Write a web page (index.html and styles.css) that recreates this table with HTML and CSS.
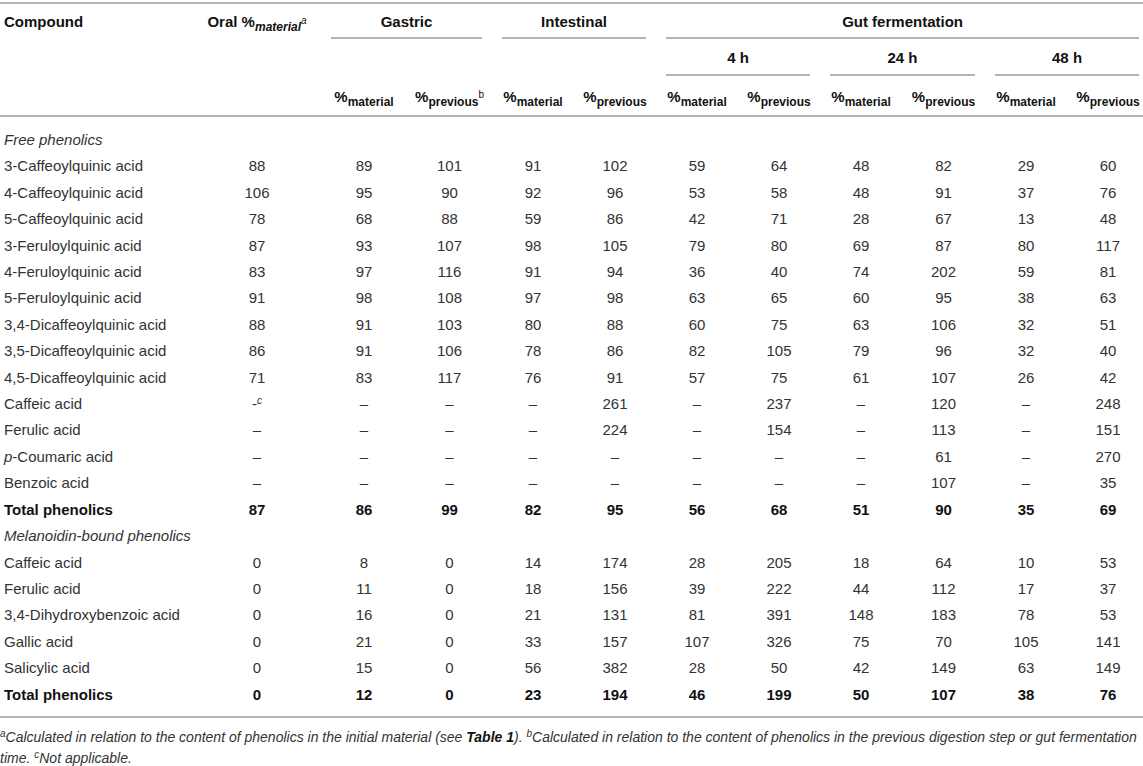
FILE: index.html
```html
<!DOCTYPE html>
<html>
<head>
<meta charset="utf-8">
<link rel="stylesheet" href="styles.css">
</head>
<body>
<div class="wrap">
<table class="data">
<colgroup>
<col class="c-name"><col class="c-oral">
<col class="c-g1"><col class="c-g2">
<col class="c-n"><col class="c-n">
<col class="c-n"><col class="c-n">
<col class="c-n"><col class="c-w">
<col class="c-n"><col class="c-n">
</colgroup>
<thead>
<tr class="r1">
<th class="name">Compound</th>
<th>Oral %<i class="sb">material</i><sup class="fn">a</sup></th>
<th colspan="2"><div class="cap">Gastric</div></th>
<th colspan="2"><div class="cap">Intestinal</div></th>
<th colspan="6"><div class="cap">Gut fermentation</div></th>
</tr>
<tr class="r2">
<th></th><th></th><th colspan="2"></th><th colspan="2"></th>
<th colspan="2"><div class="cap">4 h</div></th>
<th colspan="2"><div class="cap">24 h</div></th>
<th colspan="2"><div class="cap">48 h</div></th>
</tr>
<tr class="r3">
<th></th><th></th>
<th>%<sub>material</sub></th><th>%<sub>previous<sup class="fn2">b</sup></sub></th>
<th>%<sub>material</sub></th><th>%<sub>previous</sub></th>
<th>%<sub>material</sub></th><th>%<sub>previous</sub></th>
<th>%<sub>material</sub></th><th>%<sub>previous</sub></th>
<th>%<sub>material</sub></th><th>%<sub>previous</sub></th>
</tr>
</thead>
<tbody>
<tr class="first"><td class="name sec" colspan="12">Free phenolics</td></tr>
<tr><td class="name">3-Caffeoylquinic acid</td><td>88</td><td>89</td><td>101</td><td>91</td><td>102</td><td>59</td><td>64</td><td>48</td><td>82</td><td>29</td><td>60</td></tr>
<tr><td class="name">4-Caffeoylquinic acid</td><td>106</td><td>95</td><td>90</td><td>92</td><td>96</td><td>53</td><td>58</td><td>48</td><td>91</td><td>37</td><td>76</td></tr>
<tr><td class="name">5-Caffeoylquinic acid</td><td>78</td><td>68</td><td>88</td><td>59</td><td>86</td><td>42</td><td>71</td><td>28</td><td>67</td><td>13</td><td>48</td></tr>
<tr><td class="name">3-Feruloylquinic acid</td><td>87</td><td>93</td><td>107</td><td>98</td><td>105</td><td>79</td><td>80</td><td>69</td><td>87</td><td>80</td><td>117</td></tr>
<tr><td class="name">4-Feruloylquinic acid</td><td>83</td><td>97</td><td>116</td><td>91</td><td>94</td><td>36</td><td>40</td><td>74</td><td>202</td><td>59</td><td>81</td></tr>
<tr><td class="name">5-Feruloylquinic acid</td><td>91</td><td>98</td><td>108</td><td>97</td><td>98</td><td>63</td><td>65</td><td>60</td><td>95</td><td>38</td><td>63</td></tr>
<tr><td class="name">3,4-Dicaffeoylquinic acid</td><td>88</td><td>91</td><td>103</td><td>80</td><td>88</td><td>60</td><td>75</td><td>63</td><td>106</td><td>32</td><td>51</td></tr>
<tr><td class="name">3,5-Dicaffeoylquinic acid</td><td>86</td><td>91</td><td>106</td><td>78</td><td>86</td><td>82</td><td>105</td><td>79</td><td>96</td><td>32</td><td>40</td></tr>
<tr><td class="name">4,5-Dicaffeoylquinic acid</td><td>71</td><td>83</td><td>117</td><td>76</td><td>91</td><td>57</td><td>75</td><td>61</td><td>107</td><td>26</td><td>42</td></tr>
<tr><td class="name">Caffeic acid</td><td>-<sup class="fn">c</sup></td><td>–</td><td>–</td><td>–</td><td>261</td><td>–</td><td>237</td><td>–</td><td>120</td><td>–</td><td>248</td></tr>
<tr><td class="name">Ferulic acid</td><td>–</td><td>–</td><td>–</td><td>–</td><td>224</td><td>–</td><td>154</td><td>–</td><td>113</td><td>–</td><td>151</td></tr>
<tr><td class="name"><i>p</i>-Coumaric acid</td><td>–</td><td>–</td><td>–</td><td>–</td><td>–</td><td>–</td><td>–</td><td>–</td><td>61</td><td>–</td><td>270</td></tr>
<tr><td class="name">Benzoic acid</td><td>–</td><td>–</td><td>–</td><td>–</td><td>–</td><td>–</td><td>–</td><td>–</td><td>107</td><td>–</td><td>35</td></tr>
<tr class="total"><td class="name">Total phenolics</td><td>87</td><td>86</td><td>99</td><td>82</td><td>95</td><td>56</td><td>68</td><td>51</td><td>90</td><td>35</td><td>69</td></tr>
<tr><td class="name sec" colspan="12">Melanoidin-bound phenolics</td></tr>
<tr><td class="name">Caffeic acid</td><td>0</td><td>8</td><td>0</td><td>14</td><td>174</td><td>28</td><td>205</td><td>18</td><td>64</td><td>10</td><td>53</td></tr>
<tr><td class="name">Ferulic acid</td><td>0</td><td>11</td><td>0</td><td>18</td><td>156</td><td>39</td><td>222</td><td>44</td><td>112</td><td>17</td><td>37</td></tr>
<tr><td class="name">3,4-Dihydroxybenzoic acid</td><td>0</td><td>16</td><td>0</td><td>21</td><td>131</td><td>81</td><td>391</td><td>148</td><td>183</td><td>78</td><td>53</td></tr>
<tr><td class="name">Gallic acid</td><td>0</td><td>21</td><td>0</td><td>33</td><td>157</td><td>107</td><td>326</td><td>75</td><td>70</td><td>105</td><td>141</td></tr>
<tr><td class="name">Salicylic acid</td><td>0</td><td>15</td><td>0</td><td>56</td><td>382</td><td>28</td><td>50</td><td>42</td><td>149</td><td>63</td><td>149</td></tr>
<tr class="total last"><td class="name">Total phenolics</td><td>0</td><td>12</td><td>0</td><td>23</td><td>194</td><td>46</td><td>199</td><td>50</td><td>107</td><td>38</td><td>76</td></tr>
</tbody>
</table>
<p class="notes"><sup class="nm">a</sup>Calculated in relation to the content of phenolics in the initial material (see <b>Table 1</b>). <sup class="nm">b</sup>Calculated in relation to the content of phenolics in the previous digestion step or gut fermentation time. <sup class="nm">c</sup>Not applicable.</p>
</div>
</body>
</html>
```

FILE: styles.css
```css
html, body {
  margin: 0;
  padding: 0;
  background: #fff;
  overflow: hidden;
}
body {
  font-family: "Liberation Sans", Arial, sans-serif;
  color: #333;
  font-size: 15px;
}
.wrap {
  padding-top: 2px;
  width: 1149px;
}
.data {
  border-collapse: collapse;
  table-layout: fixed;
  width: 1149px;
  border-top: 2px solid #b3b3b3;
  border-bottom: 2px solid #b3b3b3;
}
.c-name { width: 193px; }
.c-oral { width: 128px; }
.c-g1 { width: 86px; }
.c-g2 { width: 85px; }
.c-n { width: 82px; }
.c-w { width: 83px; }

th {
  font-weight: bold;
  color: #111;
  padding: 0;
  text-align: center;
  white-space: nowrap;
  font-size: 15px;
}
th.name, td.name {
  text-align: left;
  padding-left: 4px;
}
.r1 th {
  height: 35px;
  vertical-align: top;
  line-height: 35px;
}
.r2 th {
  height: 37px;
  vertical-align: top;
  line-height: 37px;
}
.cap {
  margin: 0 10px;
  border-bottom: 2px solid #b3b3b3;
  height: 33px;
}
.r2 .cap { height: 35px; }
.r3 th {
  height: 37px;
  border-bottom: 2px solid #b3b3b3;
  vertical-align: middle;
  line-height: 20px;
  padding-top: 2px;
}
sub {
  font-size: 12px;
  vertical-align: -4px;
  line-height: 0;
}
.sb {
  font-size: 12px;
  vertical-align: -4px;
  line-height: 0;
}
.fn {
  font-style: italic;
  font-weight: normal;
  font-size: 10px;
  vertical-align: 5px;
  line-height: 0;
}
.r1 .fn { font-weight: normal; font-size: 10px; vertical-align: 3px; }
.fn2 {
  font-size: 10px;
  font-weight: normal;
  vertical-align: 8px;
  line-height: 0;
}

td {
  padding: 0;
  text-align: center;
  line-height: 26.4px;
  height: 26.4px;
  white-space: nowrap;
  color: #333;
}
td.sec {
  font-style: italic;
}
.first td { padding-top: 10px; }
.last td { padding-bottom: 8px; }
.total td {
  font-weight: bold;
  color: #111;
}

.notes {
  margin: 9px 0 0 0;
  width: 1143px;
  font-style: italic;
  font-size: 14px;
  line-height: 21px;
  color: #333;
}
.notes b { color: #111; }
.nm {
  font-size: 10px;
  vertical-align: 5px;
  line-height: 0;
}
```
